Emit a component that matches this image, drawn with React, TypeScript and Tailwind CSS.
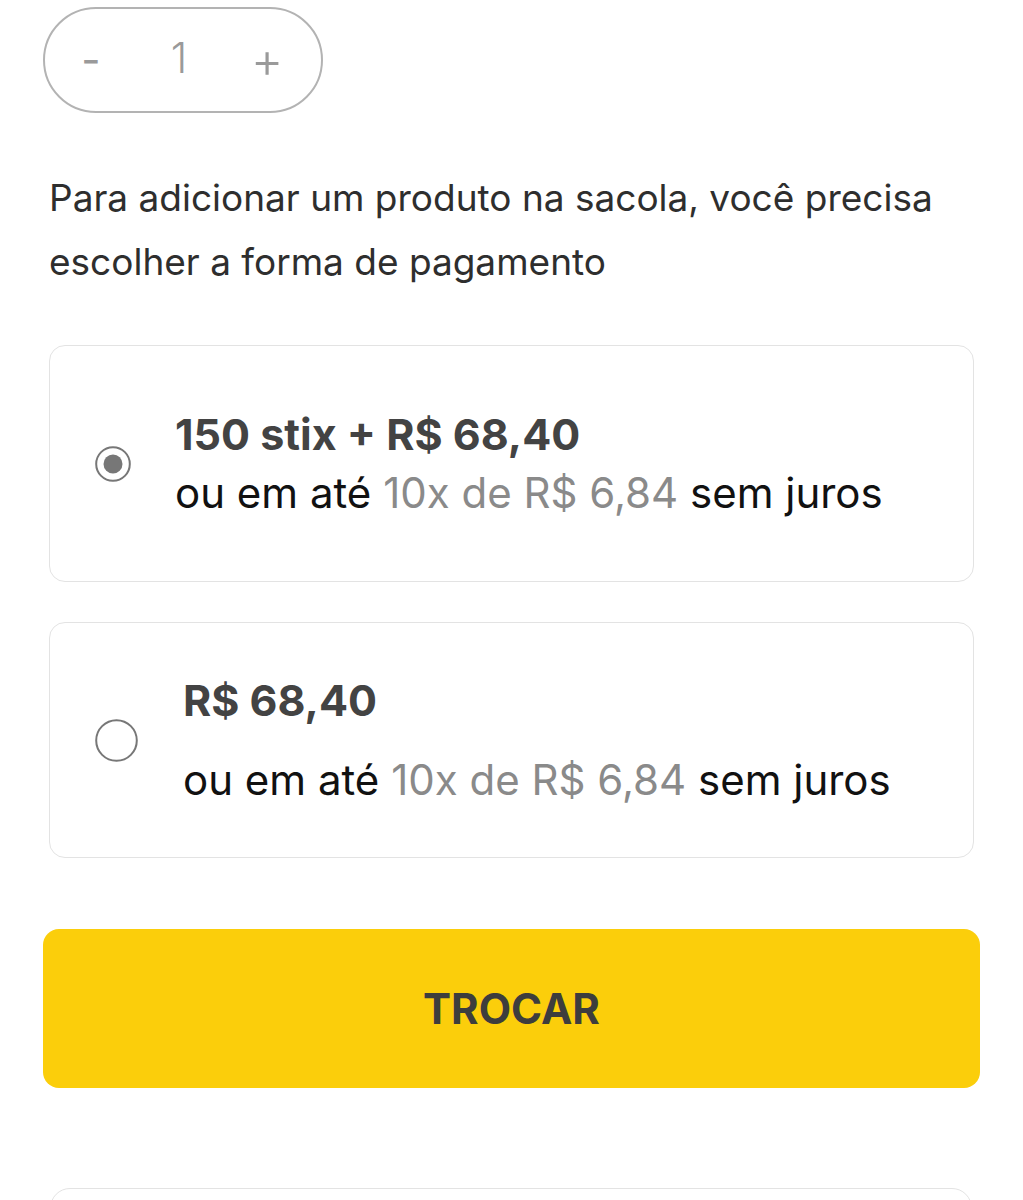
import React from "react";

function Radio({ checked, size }: { checked: boolean; size: number }) {
  return (
    <svg width={size} height={size} viewBox={`0 0 ${size} ${size}`} className="shrink-0">
      <circle cx={size / 2} cy={size / 2} r={size / 2 - 1.2} fill="white" stroke="#777" strokeWidth="2" />
      {checked && <circle cx={size / 2} cy={size / 2} r={9.5} fill="#777" />}
    </svg>
  );
}

export default function App() {
  return (
    <div
      className="w-[1023px] h-[1200px] overflow-hidden bg-white flex flex-col pt-[7px]"
      style={{ fontFamily: "Inter, 'Noto Sans', sans-serif" }}
    >
      {/* stepper */}
      <div className="shrink-0 ml-[43px] w-[280px] h-[106px] rounded-full border-2 border-[#b3b3b3] flex items-center text-[#9a9a9a]">
        <span className="w-[90px] text-center text-[42px] leading-none pl-[2px]">-</span>
        <span className="w-[88px] text-center text-[42px] leading-none font-light -mt-[4px]">1</span>
        <span className="w-[88px] text-center text-[50px] leading-none font-light">+</span>
      </div>

      <p className="shrink-0 ml-[49px] mt-[53px] w-[930px] text-[37px] leading-[64px] text-[#2e2e2e]">
        Para adicionar um produto na sacola, você precisa escolher a forma de pagamento
      </p>

      {/* option 1 */}
      <div className="shrink-0 ml-[49px] mt-[51px] w-[925px] h-[237px] rounded-[16px] border border-[#e3e3e3] flex items-center">
        <div className="w-[125px] flex justify-center">
          <Radio checked size={36} />
        </div>
        <div className="flex flex-col">
          <div className="text-[43px] leading-[50px] font-bold text-[#434343]">150 stix + R$ 68,40</div>
          <div className="mt-[9px] text-[42px] leading-[50px] text-[#111]">
            ou em até <span className="text-[#8a8a8a]">10x de R$ 6,84</span> sem juros
          </div>
        </div>
      </div>

      {/* option 2 */}
      <div className="shrink-0 ml-[49px] mt-[40px] w-[925px] h-[236px] rounded-[16px] border border-[#e3e3e3] flex items-center">
        <div className="w-[133px] flex justify-center">
          <Radio checked={false} size={43} />
        </div>
        <div className="flex flex-col">
          <div className="text-[43px] leading-[50px] font-bold text-[#434343]">R$ 68,40</div>
          <div className="mt-[30px] text-[42px] leading-[50px] text-[#111]">
            ou em até <span className="text-[#8a8a8a]">10x de R$ 6,84</span> sem juros
          </div>
        </div>
      </div>

      {/* button */}
      <button className="shrink-0 ml-[43px] mt-[71px] w-[937px] h-[159px] rounded-[16px] bg-[#fbce0b] flex items-center justify-center text-[42px] font-bold text-[#3d3d3d]">
        TROCAR
      </button>

      {/* next card (partial) */}
      <div className="shrink-0 ml-[50px] mt-[100px] w-[922px] h-[120px] rounded-[20px] border border-[#e3e3e3]" />
    </div>
  );
}
